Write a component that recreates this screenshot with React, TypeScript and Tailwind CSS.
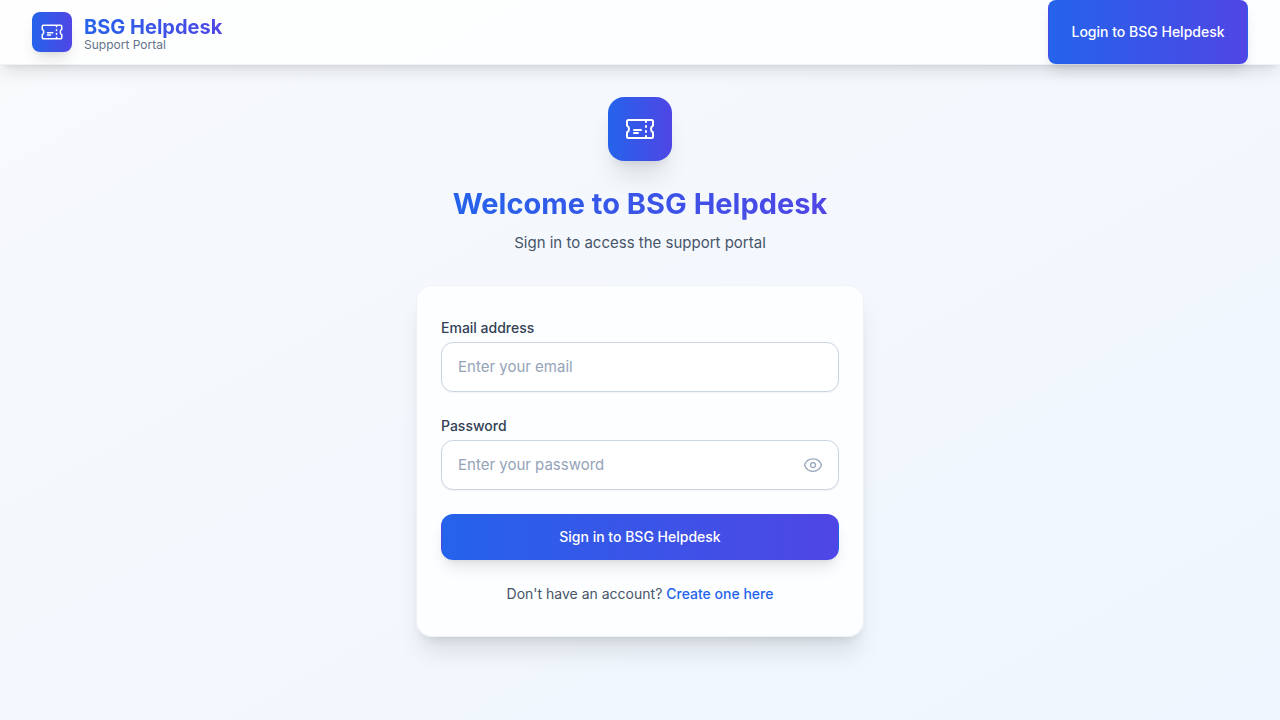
import { useState } from "react";

function TicketIcon({ className }: { className: string }) {
  return (
    <svg className={className} fill="none" viewBox="0 0 24 24" strokeWidth={1.5} stroke="currentColor" aria-hidden="true">
      <path
        strokeLinecap="round"
        strokeLinejoin="round"
        d="M16.5 6v.75m0 3v.75m0 3v.75m0 3V18m-9-5.25h5.25M7.5 15h3M3.375 5.25c-.621 0-1.125.504-1.125 1.125v3.026a2.999 2.999 0 0 1 0 5.198v3.026c0 .621.504 1.125 1.125 1.125h17.25c.621 0 1.125-.504 1.125-1.125v-3.026a2.999 2.999 0 0 1 0-5.198V6.375c0-.621-.504-1.125-1.125-1.125H3.375Z"
      />
    </svg>
  );
}

function EyeIcon() {
  return (
    <svg className="size-5" fill="none" viewBox="0 0 24 24" strokeWidth={1.5} stroke="currentColor" aria-hidden="true">
      <path
        strokeLinecap="round"
        strokeLinejoin="round"
        d="M2.036 12.322a1.012 1.012 0 0 1 0-.639C3.423 7.51 7.36 4.5 12 4.5c4.638 0 8.573 3.007 9.963 7.178.07.207.07.431 0 .639C20.577 16.49 16.64 19.5 12 19.5c-4.638 0-8.573-3.007-9.963-7.178Z"
      />
      <path strokeLinecap="round" strokeLinejoin="round" d="M15 12a3 3 0 1 1-6 0 3 3 0 0 1 6 0Z" />
    </svg>
  );
}

const inputClass =
  "block w-full rounded-xl border border-[#cbd5e1] bg-white px-4 py-3 text-[15px] leading-6 text-[#0f172a] shadow-xs placeholder:text-[#94a3b8] focus:border-[#3b82f6] focus:outline-none";

export default function App() {
  const [visible, setVisible] = useState(false);

  return (
    <div className="min-h-screen bg-linear-to-br/srgb from-[#f8fafc] to-[#eff6ff] font-['Inter',sans-serif] antialiased">
      <header className="relative border-b border-[#e2e8f0]/50 bg-white/80 shadow-lg">
        <div className="flex h-16 justify-between px-8">
          <div className="flex items-center gap-3">
            <div className="flex size-10 items-center justify-center rounded-lg bg-linear-to-r/srgb from-[#2563eb] to-[#4f46e5] text-white shadow-lg">
              <TicketIcon className="size-6" />
            </div>
            <div className="pt-0.5">
              <p className="bg-linear-to-r/srgb from-[#2563eb] to-[#4f46e5] bg-clip-text text-xl font-bold text-transparent">
                BSG Helpdesk
              </p>
              <p className="-mt-1 text-xs text-[#64748b]">Support Portal</p>
            </div>
          </div>
          <button
            type="button"
            className="w-[200px] rounded-lg border border-transparent bg-linear-to-r/srgb from-[#2563eb] to-[#4f46e5] text-sm font-medium text-white shadow-lg"
          >
            Login to BSG Helpdesk
          </button>
        </div>
      </header>

      <main className="mx-auto max-w-md py-8">
        <div className="flex flex-col items-center text-center">
          <div className="flex size-16 items-center justify-center rounded-2xl bg-linear-to-r/srgb from-[#2563eb] to-[#4f46e5] text-white shadow-xl">
            <TicketIcon className="size-8" />
          </div>
          <h1 className="mt-6 bg-linear-to-r/srgb from-[#2563eb] to-[#4f46e5] bg-clip-text text-[29px] leading-[38px] font-bold text-transparent">
            Welcome to BSG Helpdesk
          </h1>
          <p className="mt-2 text-[15px] leading-6 text-[#475569]">Sign in to access the support portal</p>
        </div>

        <div className="mt-[30px] rounded-2xl border border-[#e2e8f0]/50 bg-white/80 px-6 py-8 shadow-xl">
          <form className="flex flex-col gap-6" onSubmit={(e) => e.preventDefault()}>
            <div className="flex flex-col gap-1">
              <label htmlFor="email" className="text-sm font-medium text-[#334155]">
                Email address
              </label>
              <input id="email" type="email" placeholder="Enter your email" className={inputClass} />
            </div>
            <div className="flex flex-col gap-1">
              <label htmlFor="password" className="text-sm font-medium text-[#334155]">
                Password
              </label>
              <div className="relative">
                <input
                  id="password"
                  type={visible ? "text" : "password"}
                  placeholder="Enter your password"
                  className={inputClass}
                />
                <button
                  type="button"
                  aria-label={visible ? "Hide password" : "Show password"}
                  onClick={() => setVisible(!visible)}
                  className="absolute inset-y-0 right-0 flex items-center pr-4 text-[#94a3b8]"
                >
                  <EyeIcon />
                </button>
              </div>
            </div>
            <button
              type="submit"
              className="rounded-xl border border-transparent bg-linear-to-r/srgb from-[#2563eb] to-[#4f46e5] px-4 py-3 text-sm font-medium text-white shadow-lg"
            >
              Sign in to BSG Helpdesk
            </button>
            <p className="text-center text-sm text-[#475569]">
              Don't have an account?{" "}
              <a href="#register" className="font-medium text-[#2563eb]">
                Create one here
              </a>
            </p>
          </form>
        </div>
      </main>
    </div>
  );
}
